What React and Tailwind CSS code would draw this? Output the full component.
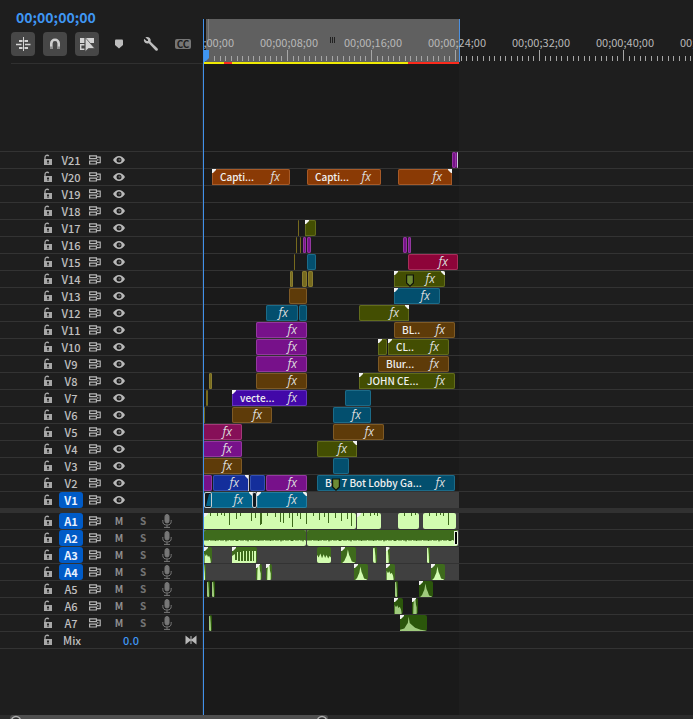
import { clsx } from 'clsx';

const COLORS = {
  orange: 'bg-[#8a3a05] inset-ring-[#a65a28]',
  olive: 'bg-[#434e02] inset-ring-[#626c1c]',
  khaki: 'bg-[#766a1e] inset-ring-[#8a7d30]',
  purple: 'bg-[#77118a] inset-ring-[#93399f]',
  teal: 'bg-[#034f6e] inset-ring-[#1c6b88]',
  cyan: 'bg-[#02638b] inset-ring-[#257d9f]',
  brown: 'bg-[#5e3b09] inset-ring-[#7e5a26]',
  crimson: 'bg-[#8d0439] inset-ring-[#a62f5a]',
  magenta: 'bg-[#860f58] inset-ring-[#a23a77]',
  violet: 'bg-[#4208a8] inset-ring-[#6434bd]',
  blue: 'bg-[#142e9b] inset-ring-[#3550b0]',
};

// Clip start / end are offsets from the start of the sequence.
const videoTracks = [
  { id: 'V21', clips: [{ s: 249, e: 253, c: 'purple' }, { s: 253, e: 255, c: 'purple', edge: true }] },
  {
    id: 'V20',
    clips: [
      { s: 9, e: 87, c: 'orange', text: 'Capti...', fx: true, left: true },
      { s: 104, e: 178, c: 'orange', text: 'Capti...', fx: true },
      { s: 195, e: 249, c: 'orange', fx: true, right: true },
    ],
  },
  { id: 'V19', clips: [] },
  { id: 'V18', clips: [] },
  { id: 'V17', clips: [{ s: 95, e: 96, c: 'khaki' }, { s: 102, e: 113, c: 'olive', left: true }] },
  {
    id: 'V16',
    clips: [
      { s: 93, e: 94, c: 'khaki' },
      { s: 97, e: 98, c: 'khaki' },
      { s: 100, e: 103, c: 'purple' },
      { s: 104, e: 108, c: 'purple' },
      { s: 200, e: 204, c: 'purple' },
      { s: 205, e: 208, c: 'purple' },
    ],
  },
  {
    id: 'V15',
    clips: [{ s: 91, e: 92, c: 'khaki' }, { s: 104, e: 113, c: 'teal' }, { s: 205, e: 255, c: 'crimson', fx: true }],
  },
  {
    id: 'V14',
    clips: [
      { s: 87, e: 90, c: 'khaki' },
      { s: 99, e: 104, c: 'khaki' },
      { s: 105, e: 110, c: 'khaki' },
      { s: 191, e: 242, c: 'olive', fx: true, left: true, right: true, marker: 16 },
    ],
  },
  { id: 'V13', clips: [{ s: 86, e: 104, c: 'brown' }, { s: 191, e: 237, c: 'teal', fx: true, left: true }] },
  {
    id: 'V12',
    clips: [
      { s: 63, e: 95, c: 'teal', fx: true },
      { s: 96, e: 104, c: 'teal' },
      { s: 156, e: 206, c: 'olive', fx: true, right: true },
    ],
  },
  { id: 'V11', clips: [{ s: 53, e: 104, c: 'purple', fx: true }, { s: 191, e: 252, c: 'brown', text: 'BL..', fx: true }] },
  {
    id: 'V10',
    clips: [
      { s: 53, e: 104, c: 'purple', fx: true },
      { s: 175, e: 184, c: 'olive', left: true },
      { s: 185, e: 246, c: 'olive', text: 'CL..', fx: true, left: true },
    ],
  },
  { id: 'V9', clips: [{ s: 53, e: 104, c: 'purple', fx: true }, { s: 175, e: 246, c: 'brown', text: 'Blur...', fx: true }] },
  {
    id: 'V8',
    clips: [
      { s: 6, e: 9, c: 'khaki' },
      { s: 53, e: 104, c: 'brown', fx: true },
      { s: 156, e: 252, c: 'olive', text: 'JOHN CE...', fx: true, left: true },
    ],
  },
  {
    id: 'V7',
    clips: [
      { s: 3, e: 5, c: 'khaki' },
      { s: 29, e: 104, c: 'violet', text: 'vecte...', fx: true, left: true },
      { s: 142, e: 168, c: 'teal' },
    ],
  },
  {
    id: 'V6',
    clips: [
      { s: 1, e: 2, c: 'khaki' },
      { s: 29, e: 69, c: 'brown', fx: true },
      { s: 130, e: 168, c: 'teal', fx: true },
    ],
  },
  { id: 'V5', clips: [{ s: 0, e: 39, c: 'magenta', fx: true }, { s: 130, e: 181, c: 'brown', fx: true }] },
  { id: 'V4', clips: [{ s: 0, e: 39, c: 'purple', fx: true }, { s: 114, e: 154, c: 'olive', fx: true, right: true }] },
  { id: 'V3', clips: [{ s: 0, e: 39, c: 'brown', fx: true }, { s: 130, e: 146, c: 'teal' }] },
  {
    id: 'V2',
    clips: [
      { s: 0, e: 9, c: 'purple' },
      { s: 10, e: 46, c: 'blue', fx: true, right: true, edge: true },
      { s: 47, e: 62, c: 'blue' },
      { s: 63, e: 104, c: 'purple', fx: true },
      { s: 114, e: 252, c: 'teal', text: 'BO 7 Bot Lobby Ga...', fx: true, marker: 19 },
    ],
  },
  {
    id: 'V1',
    on: true,
    lit: true,
    clips: [
      { s: 1, e: 50, c: 'cyan', fx: true, right: true },
      { s: 54, e: 104, c: 'cyan', fx: true, left: true, right: true },
      { s: 1, e: 9, transition: true },
      { s: 49, e: 54, transition: true },
    ],
  },
];

const audioTracks = [
  {
    id: 'A1',
    on: true,
    lit: true,
    clips: [
      { s: 1, e: 153, wave: 'drips', left: true },
      { s: 154, e: 178, wave: 'drips', left: true },
      { s: 195, e: 216, wave: 'drips' },
      { s: 220, e: 253, wave: 'drips' },
    ],
  },
  { id: 'A2', on: true, lit: true, clips: [{ s: 1, e: 103, wave: 'bed' }, { s: 104, e: 255, wave: 'bed', bracket: true }] },
  {
    id: 'A3',
    on: true,
    lit: true,
    clips: [
      { s: 1, e: 9, wave: 'fall', left: true },
      { s: 29, e: 54, wave: 'comb', left: true },
      { s: 114, e: 128, wave: 'hills' },
      { s: 138, e: 153, wave: 'spike', left: true },
      { s: 170, e: 174, wave: 'sliver' },
      { s: 183, e: 187, wave: 'sliver', left: true },
      { s: 224, e: 227, wave: 'sliver' },
    ],
  },
  {
    id: 'A4',
    on: true,
    lit: true,
    clips: [
      { s: 0, e: 3, wave: 'sliver' },
      { s: 53, e: 59, wave: 'post', left: true },
      { s: 63, e: 69, wave: 'post', left: true },
      { s: 151, e: 165, wave: 'spike', left: true },
      { s: 183, e: 192, wave: 'fall', left: true },
      { s: 228, e: 242, wave: 'spike', left: true },
    ],
  },
  {
    id: 'A5',
    clips: [
      { s: 4, e: 7, wave: 'sliver' },
      { s: 9, e: 12, wave: 'sliver' },
      { s: 192, e: 195, wave: 'sliver' },
      { s: 216, e: 230, wave: 'spike', left: true },
    ],
  },
  { id: 'A6', clips: [{ s: 191, e: 200, wave: 'fall', left: true }, { s: 209, e: 215, wave: 'post', left: true }] },
  { id: 'A7', clips: [{ s: 6, e: 9, wave: 'sliver' }, { s: 197, e: 224, wave: 'tail', left: true }] },
];

const rulerLabels = ['00;00;08;00', '00;00;16;00', '00;00;24;00', '00;00;32;00', '00;00;40;00', '00;00;48;00'];

const SHAPES = {
  spike: 'M8 100L22 88L30 70L38 55L46 15L54 50L62 65L72 90L94 97V100Z',
  tail: 'M0 100V92L16 85L24 62L29 50L32 10L36 50L44 62L56 80L76 92L100 98V100Z',
  fall: 'M8 100V42L22 58L36 45L50 62L64 55L78 72L86 100Z',
  post: 'M20 100L24 40L34 12H60L66 40L78 60V100Z',
  sliver: 'M0 100V6H40L60 55L70 100Z',
  hills: 'M0 100V48L12 65L24 40L36 70L48 45L58 68L68 50L80 72L90 56L100 66V100Z',
};

const DRIPS = [[6, 3], [13, 3], [17, 2], [20, 3], [25, 12], [32, 6], [36, 3], [47, 8], [51, 5], [56, 12], [57, 11], [63, 3], [71, 4], [76, 9], [79, 10], [85, 5], [88, 14], [93, 3], [96, 6], [102, 11], [109, 3], [115, 7], [120, 4], [124, 10], [131, 5], [137, 8], [143, 6], [147, 13]];

function bedPath(width) {
  let d = `M0 0H${width}`;
  for (let x = width; x >= 0; x -= 1) {
    d += `L${x} ${10 + ((x * 7) % 5 > 2 ? 1 : 0) + ((x * 13) % 11 === 0 ? 1 : 0)}`;
  }
  return `${d}Z`;
}

function Waveform({ kind, width, lit }) {
  const light = lit ? '#d2fcb0' : '#9fca7d';
  const dark = lit ? '#3e6b1c' : '#2b560b';
  if (kind === 'drips') {
    return (
      <svg className="block h-full w-full" viewBox={`0 0 ${width} 16`} preserveAspectRatio="none">
        <rect width={width} height="16" fill={light} />
        {DRIPS.filter(([x]) => x < width - 1).map(([x, h]) => (
          <rect key={x} x={x} width="1" height={h} fill={dark} />
        ))}
      </svg>
    );
  }
  if (kind === 'bed') {
    return (
      <svg className="block h-full w-full" viewBox={`0 0 ${width} 16`} preserveAspectRatio="none">
        <rect width={width} height="16" fill={light} />
        <path d={bedPath(width)} fill={dark} />
      </svg>
    );
  }
  if (kind === 'comb') {
    return (
      <svg className="block h-full w-full" viewBox="0 0 25 16" preserveAspectRatio="none">
        <rect width="25" height="16" fill={dark} />
        <path d="M0 16V9L3 7V13H5V5H6V14H8V5H9V14H11V4H12V14H14V4H15V14H17V4H18V14H20V4H21V14H22V4H24V16Z" fill={light} />
      </svg>
    );
  }
  return (
    <svg className="block h-full w-full" viewBox="0 0 100 100" preserveAspectRatio="none">
      <rect width="100" height="100" fill={dark} />
      <path d={SHAPES[kind]} fill={light} />
    </svg>
  );
}

function Clip({ clip, lit }) {
  const width = clip.e - clip.s;
  const box = { left: clip.s, width };

  if (clip.transition) {
    return (
      <div style={box} className="absolute inset-y-0 rounded-[2px] border border-[#c3ced2] bg-[#101820]">
        {width > 6 && (
          <svg className="block h-full w-full" viewBox="0 0 6 14" preserveAspectRatio="none">
            <path d="M1 13L4 1H6V13Z" fill="#02638b" />
          </svg>
        )}
      </div>
    );
  }

  return (
    <div
      style={box}
      className={clsx(
        'absolute inset-y-0 flex items-center overflow-hidden',
        clip.left ? 'rounded-r-[2px]' : clip.right ? 'rounded-l-[2px]' : 'rounded-[2px]',
        !clip.wave && COLORS[clip.c],
        !clip.wave && width > 2 && 'inset-ring',
      )}
    >
      {clip.wave && <Waveform kind={clip.wave} width={width} lit={lit} />}
      {clip.text && <span className="pl-2 text-[10px] leading-4 font-medium whitespace-nowrap text-[#f0f0f0]">{clip.text}</span>}
      {clip.fx && (
        <span className="ml-auto pr-2.5 font-['Open_Sans','Noto_Sans',sans-serif] text-xs leading-4 text-[#dedede] italic">fx</span>
      )}
      {clip.left && (
        <svg className="absolute top-0 left-0 size-1" viewBox="0 0 4 4">
          <path d="M0 0H4V1L1 4H0Z" fill="#f2f2f2" />
        </svg>
      )}
      {clip.right && (
        <svg className="absolute top-0 right-0 size-1" viewBox="0 0 4 4">
          <path d="M0 0H4V4H3L0 1Z" fill="#f2f2f2" />
        </svg>
      )}
      {clip.edge && <span className="absolute inset-y-0 right-0 w-px bg-[#c9c9d6]" />}
      {clip.bracket && <span className="absolute inset-y-px right-0 w-1 border border-[#e8f5dc] bg-black" />}
      {clip.marker && (
        <svg style={{ left: clip.marker - 4 }} className="absolute bottom-0 h-[13px] w-2" viewBox="0 0 8 13">
          <path d="M0.600 1H7.400V9L4 12.200L0.600 9Z" fill="#6d8b35" stroke="#10130a" strokeWidth="1.200" />
        </svg>
      )}
    </div>
  );
}

function LockIcon() {
  return (
    <svg className="h-3 w-2.5" viewBox="0 0 10 12">
      <path d="M2 5V3.500A2.200 2.200 0 0 1 5.800 2" fill="none" stroke="#a8a8a8" strokeWidth="1.300" />
      <path d="M1 5H9V11H1Z" fill="#a8a8a8" />
      <path d="M4 6.500H6V8H5.500V10H4.500V8H4Z" fill="#1e1e1e" />
    </svg>
  );
}

function SyncIcon() {
  return (
    <svg className="h-2.5 w-3" viewBox="0 0 12 10" fill="none" stroke="#b4b4b4" strokeWidth="1.200">
      <path d="M0.600 0.800H7.400V3.600H0.600ZM0.600 6.200H7.400V9H0.600Z" />
      <path d="M7.400 2.200H11.200V7.600H7.400M8 4.900H9.500" />
    </svg>
  );
}

function EyeIcon() {
  return (
    <svg className="h-2 w-3" viewBox="0 0 12 8">
      <path d="M0 4C1.700 1.400 3.600 0 6 0S10.300 1.400 12 4C10.300 6.600 8.400 8 6 8S1.700 6.600 0 4Z" fill="#b9b9b9" />
      <circle cx="6" cy="4" r="2.500" fill="#1e1e1e" />
      <circle cx="6.500" cy="3.800" r="1.100" fill="#5f5f5f" />
    </svg>
  );
}

function MicIcon() {
  return (
    <svg className="h-3.5 w-2.5" viewBox="0 0 10 14" fill="none" stroke="#777" strokeWidth="1">
      <rect x="3" y="0.500" width="4" height="8.500" rx="2" fill="#777" />
      <path d="M0.800 6V7.500A4.200 3.500 0 0 0 9.200 7.500V6M5 11V13.500M2 13.400H8" />
    </svg>
  );
}

const cell = 'flex h-4 w-6 items-center justify-center';

function TrackHeader({ track, audio }) {
  return (
    <div className="flex w-[203px] shrink-0 items-center border-r border-[#2b2b2b] pl-10">
      <button aria-label={`Lock ${track.id}`} className="mr-[3px] flex w-4 justify-center"><LockIcon /></button>
      <button className={clsx(cell, 'rounded-[3px] text-[11px] leading-4', track.on ? 'bg-[#005bc7] font-bold text-[#eaf2ff]' : 'font-medium text-[#c0c0c0]')}>
        {track.id}
      </button>
      <button aria-label={`Sync lock ${track.id}`} className={cell}><SyncIcon /></button>
      {audio ? (
        <>
          <button className={clsx(cell, 'text-[10px] leading-4 font-bold text-[#8f8f8f]')}>M</button>
          <button className={clsx(cell, 'text-[10px] leading-4 font-bold text-[#747474]')}>S</button>
          <button aria-label={`Record ${track.id}`} className={cell}><MicIcon /></button>
        </>
      ) : (
        <button aria-label={`Show ${track.id}`} className={cell}><EyeIcon /></button>
      )}
    </div>
  );
}

function Lane({ track }) {
  return (
    <div className={clsx('relative w-64', track.lit ? 'bg-[#404040]' : 'bg-[#1a1a1a]')}>
      {track.clips.map((clip) => (
        <Clip key={`${clip.s}-${clip.e}`} clip={clip} lit={track.lit} />
      ))}
    </div>
  );
}

function Toolbar() {
  const toggled = 'flex size-6 items-center justify-center rounded bg-[#474747]';
  const plain = 'flex size-6 items-center justify-center';
  return (
    <div className="flex gap-2">
      <button aria-label="Insert as nest" className={toggled}>
        <svg className="size-4" viewBox="0 0 16 16" stroke="#d4d4d4" fill="none">
          <path d="M8.500 1V15" strokeWidth="1" />
          <path d="M4 5H7.500M9.500 5H13M4 12H7.500M9.500 12H13" strokeWidth="2" />
          <path d="M1 8.500H6.500M10 8.500H15.500" strokeWidth="1.600" />
        </svg>
      </button>
      <button aria-label="Snap" className={toggled}>
        <svg className="size-4" viewBox="0 0 16 16" fill="none" strokeWidth="2.600">
          <path d="M4.300 13V7.500A3.700 3.700 0 0 1 11.700 7.500V13" stroke="#cfcfcf" />
          <path d="M4.300 13V10.500M11.700 13V10.500" stroke="#8e8e8e" />
        </svg>
      </button>
      <button aria-label="Linked selection" className={toggled}>
        <svg className="size-4" viewBox="0 0 16 16">
          <path d="M1 2H5.500V7H1ZM6.700 2H15V7H6.700Z" fill="#d4d4d4" />
          <path d="M5.500 8.700H1.700V13.300H5.500" fill="none" stroke="#d4d4d4" strokeWidth="1.400" />
          <path d="M6.200 1.500V15.500L9.500 12.500H15.800Z" fill="#d4d4d4" stroke="#474747" strokeWidth="0.700" />
        </svg>
      </button>
      <button aria-label="Add marker" className={plain}>
        <svg className="h-2.5 w-2" viewBox="0 0 8 10">
          <path d="M1 0.500H7Q8 0.500 8 1.500V6L4 9.500L0 6V1.500Q0 0.500 1 0.500Z" fill="#bdbdbd" />
        </svg>
      </button>
      <button aria-label="Timeline settings" className={plain}>
        <svg className="size-4" viewBox="0 0 16 16">
          <path d="M2.300 1.200L5 3.700V5H3.700L1 2.700Q0.300 5.200 2 6.700Q3.700 8 5.800 7.200L12.600 14.400Q13.600 15.200 14.500 14.400Q15.400 13.500 14.600 12.500L7.600 5.700Q8.200 3.500 6.800 2Q5 0.300 2.300 1.200Z" fill="#bdbdbd" />
        </svg>
      </button>
      <button aria-label="Captions" className={plain}>
        <span className="flex h-2.5 w-4 items-center justify-center rounded-[2px] bg-[#767676] text-[10px] leading-none font-bold text-[#1e1e1e]">CC</span>
      </button>
    </div>
  );
}

function Ruler() {
  const ticks = Array.from({ length: 88 }, (_, i) => i + 2);
  return (
    <div className="relative flex flex-1 flex-col overflow-hidden pt-[19px]">
      <div className="flex h-[43px]">
        <div className="flex w-64 border-l-3 border-[#161616] bg-[#606060]">
          <span className="ml-0.5 h-5 w-px bg-[#7d7d7d]" />
          <span className="mt-[18px] ml-[121px] h-1.5 w-[5px] border-x border-[#222222] pl-px">
            <span className="block h-full w-px bg-[#222222]" />
          </span>
        </div>
        <div className="w-px bg-[#4a90e2]" />
      </div>
      <div className="flex h-0.5 w-64">
        <span className="w-[21px] bg-[#efe905]" />
        <span className="w-2 bg-[#fb2a1c]" />
        <span className="w-44 bg-[#efe905]" />
        <span className="flex-1 bg-[#fb2a1c]" />
      </div>
      {/* Time labels and ticks run over the work area bar */}
      <div className="absolute top-[35px] left-0 flex text-[11px] leading-[14px] text-[#b8b8b8]">
        <span className="w-11 shrink-0 pr-[13px] text-right">;00;00</span>
        {rulerLabels.map((label) => (
          <span key={label} className="w-[84px] shrink-0 text-center">{label}</span>
        ))}
      </div>
      <svg className="absolute top-[50px] left-0 h-[11px] w-[500px]" viewBox="0 0 500 11">
        {ticks.map((i) => (
          <rect key={i} x={Math.round(i * 5.6)} y={i % 15 ? 6 : 0} width="1" height={i % 15 ? 5 : 11} fill="#a6a6a6" />
        ))}
      </svg>
      <svg className="absolute top-[50px] left-0 h-3 w-1.5" viewBox="0 0 6 12">
        <path d="M0 0H6V8L2 12H0Z" fill="#3f96f3" />
      </svg>
    </div>
  );
}

export default function App() {
  return (
    <main className="relative flex min-h-screen flex-col overflow-hidden bg-[#1e1e1e] font-['Noto_Sans_CJK_SC','Open_Sans',sans-serif] text-[#b4b4b4]">
      <header className="flex h-16">
        <div className="flex w-[203px] shrink-0 flex-col pl-[11px]">
          <button className="mt-[7px] mb-[5px] ml-[5px] self-start text-sm leading-5 font-bold text-[#3f96f3]">00;00;00;00</button>
          <Toolbar />
          <div className="mt-[7px] h-px bg-[#303030]" />
        </div>
        <Ruler />
      </header>

      <div className="flex h-[87px]">
        <div className="w-[203px] shrink-0 border-r border-[#2b2b2b]" />
        <div className="w-64 bg-[#1a1a1a]" />
      </div>

      <section aria-label="Video tracks">
        {videoTracks.map((track) => (
          <div key={track.id} className="flex h-[17px] border-t border-[#333333]">
            <TrackHeader track={track} />
            <Lane track={track} />
          </div>
        ))}
      </section>

      <div className="h-[5px] bg-[#313131]" />

      <section aria-label="Audio tracks">
        {audioTracks.map((track) => (
          <div key={track.id} className="flex h-[17px] border-b border-[#333333]">
            <TrackHeader track={track} audio />
            <Lane track={track} />
          </div>
        ))}
        <div className="flex h-[17px] border-b border-[#333333]">
          <div className="flex w-[203px] shrink-0 items-center border-r border-[#2b2b2b] pr-[5px] pl-10">
            <button aria-label="Lock Mix" className="mr-[3px] flex w-4 justify-center"><LockIcon /></button>
            <span className="w-14 pl-1 text-[11px] leading-4 font-medium text-[#c0c0c0]">Mix</span>
            <button className="w-8 text-center text-[11px] leading-4 font-medium text-[#3f96f3]">0.0</button>
            <button aria-label="Keyframes" className="ml-auto">
              <svg className="h-2.5 w-3" viewBox="0 0 12 10">
                <path d="M0.500 0.500L5.500 4.500V1H6.500V4.500L11.500 0.500V9.500L6.500 5.500V9H5.500V5.500L0.500 9.500Z" fill="#b9b9b9" />
              </svg>
            </button>
          </div>
          <div className="w-64 bg-[#1a1a1a]" />
        </div>
      </section>

      <div className="flex flex-1">
        <div className="w-[203px] shrink-0 border-r border-[#2b2b2b]" />
        <div className="w-64 bg-[#1a1a1a]" />
      </div>

      {/* Zoom scroll bar, cut off by the panel edge */}
      <footer className="flex h-1 overflow-hidden bg-[#2b2b2b] pl-2.5">
        <svg className="h-3 w-[320px] shrink-0" viewBox="0 0 320 12">
          <rect width="318" height="12" rx="3" fill="#4f4f4f" />
          <circle cx="6" cy="6" r="4.500" fill="#2b2b2b" stroke="#b0b0b0" strokeWidth="1.500" />
          <circle cx="312" cy="6" r="4.500" fill="#2b2b2b" stroke="#b0b0b0" strokeWidth="1.500" />
        </svg>
      </footer>

      <div className="absolute top-[19px] bottom-1 left-[203px] w-px bg-[#4090ea]" />
    </main>
  );
}
